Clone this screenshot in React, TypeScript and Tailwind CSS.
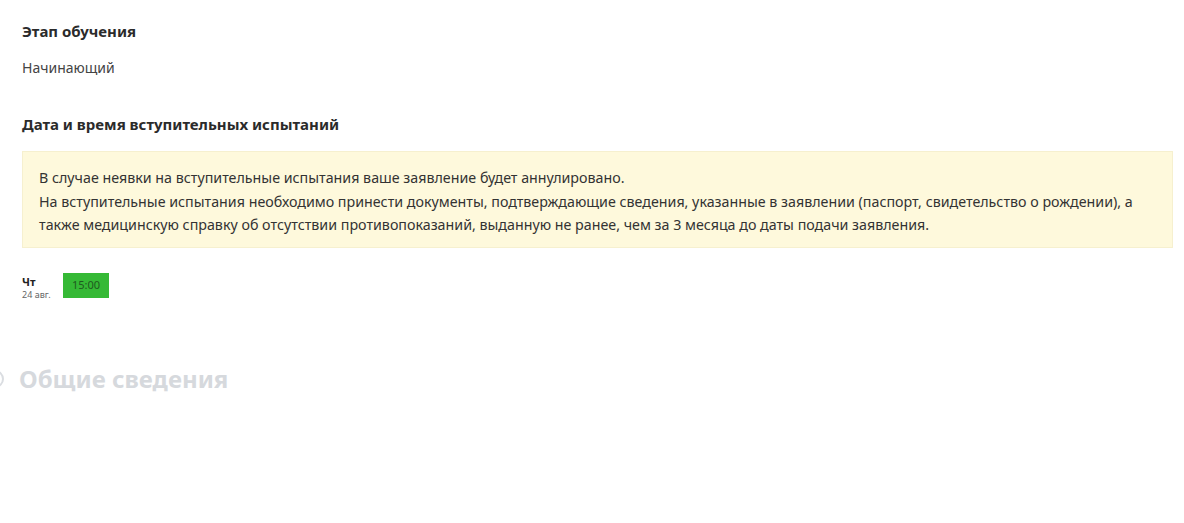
export default function App() {
  return (
    <div className="min-h-[523px] bg-white text-[#333] overflow-hidden" style={{ fontFamily: '"Noto Sans", "Open Sans", sans-serif' }}>
      <div className="pl-[22px] pr-[11px] pt-[20px]">
        <h3 className="text-[15px] font-bold leading-[22px] text-[#2b2b2b]">Этап обучения</h3>
        <p className="mt-[16px] text-[14px] leading-[20px] text-[#444]">Начинающий</p>

        <h3 className="mt-[35px] text-[15px] font-bold leading-[22px] text-[#2b2b2b]">Дата и время вступительных испытаний</h3>

        <div className="mt-[16px] h-[97px] border border-[#f6f0cf] bg-[#fef9dc] px-[16px] pt-[14px] text-[14.25px] leading-[23.5px] text-[#333] whitespace-nowrap">
          <p>В случае неявки на вступительные испытания ваше заявление будет аннулировано.</p>
          <p>
            На вступительные испытания необходимо принести документы, подтверждающие сведения, указанные в заявлении (паспорт, свидетельство о рождении), а
            <br />
            также медицинскую справку об отсутствии противопоказаний, выданную не ранее, чем за 3 месяца до даты подачи заявления.
          </p>
        </div>

        <div className="mt-[25px] flex items-start gap-[12px]">
          <div className="w-[29px] pt-[2px]">
            <div className="text-[11px] font-bold leading-[14px] text-[#222]">Чт</div>
            <div className="text-[9px] leading-[12px] text-[#666]">24 авг.</div>
          </div>
          <button className="h-[25px] w-[46px] bg-[#35b935] text-[11px] text-[#1f5a1f]">15:00</button>
        </div>
      </div>

      <div className="relative mt-[63px] flex items-center pl-[19px]">
        <span className="absolute left-[-14px] top-[6px] h-[18px] w-[18px] rounded-full border-2 border-[#dadde1]" />
        <h2 className="text-[24px] font-bold leading-[30px] text-[#d6d9dd]">Общие сведения</h2>
      </div>
    </div>
  );
}
